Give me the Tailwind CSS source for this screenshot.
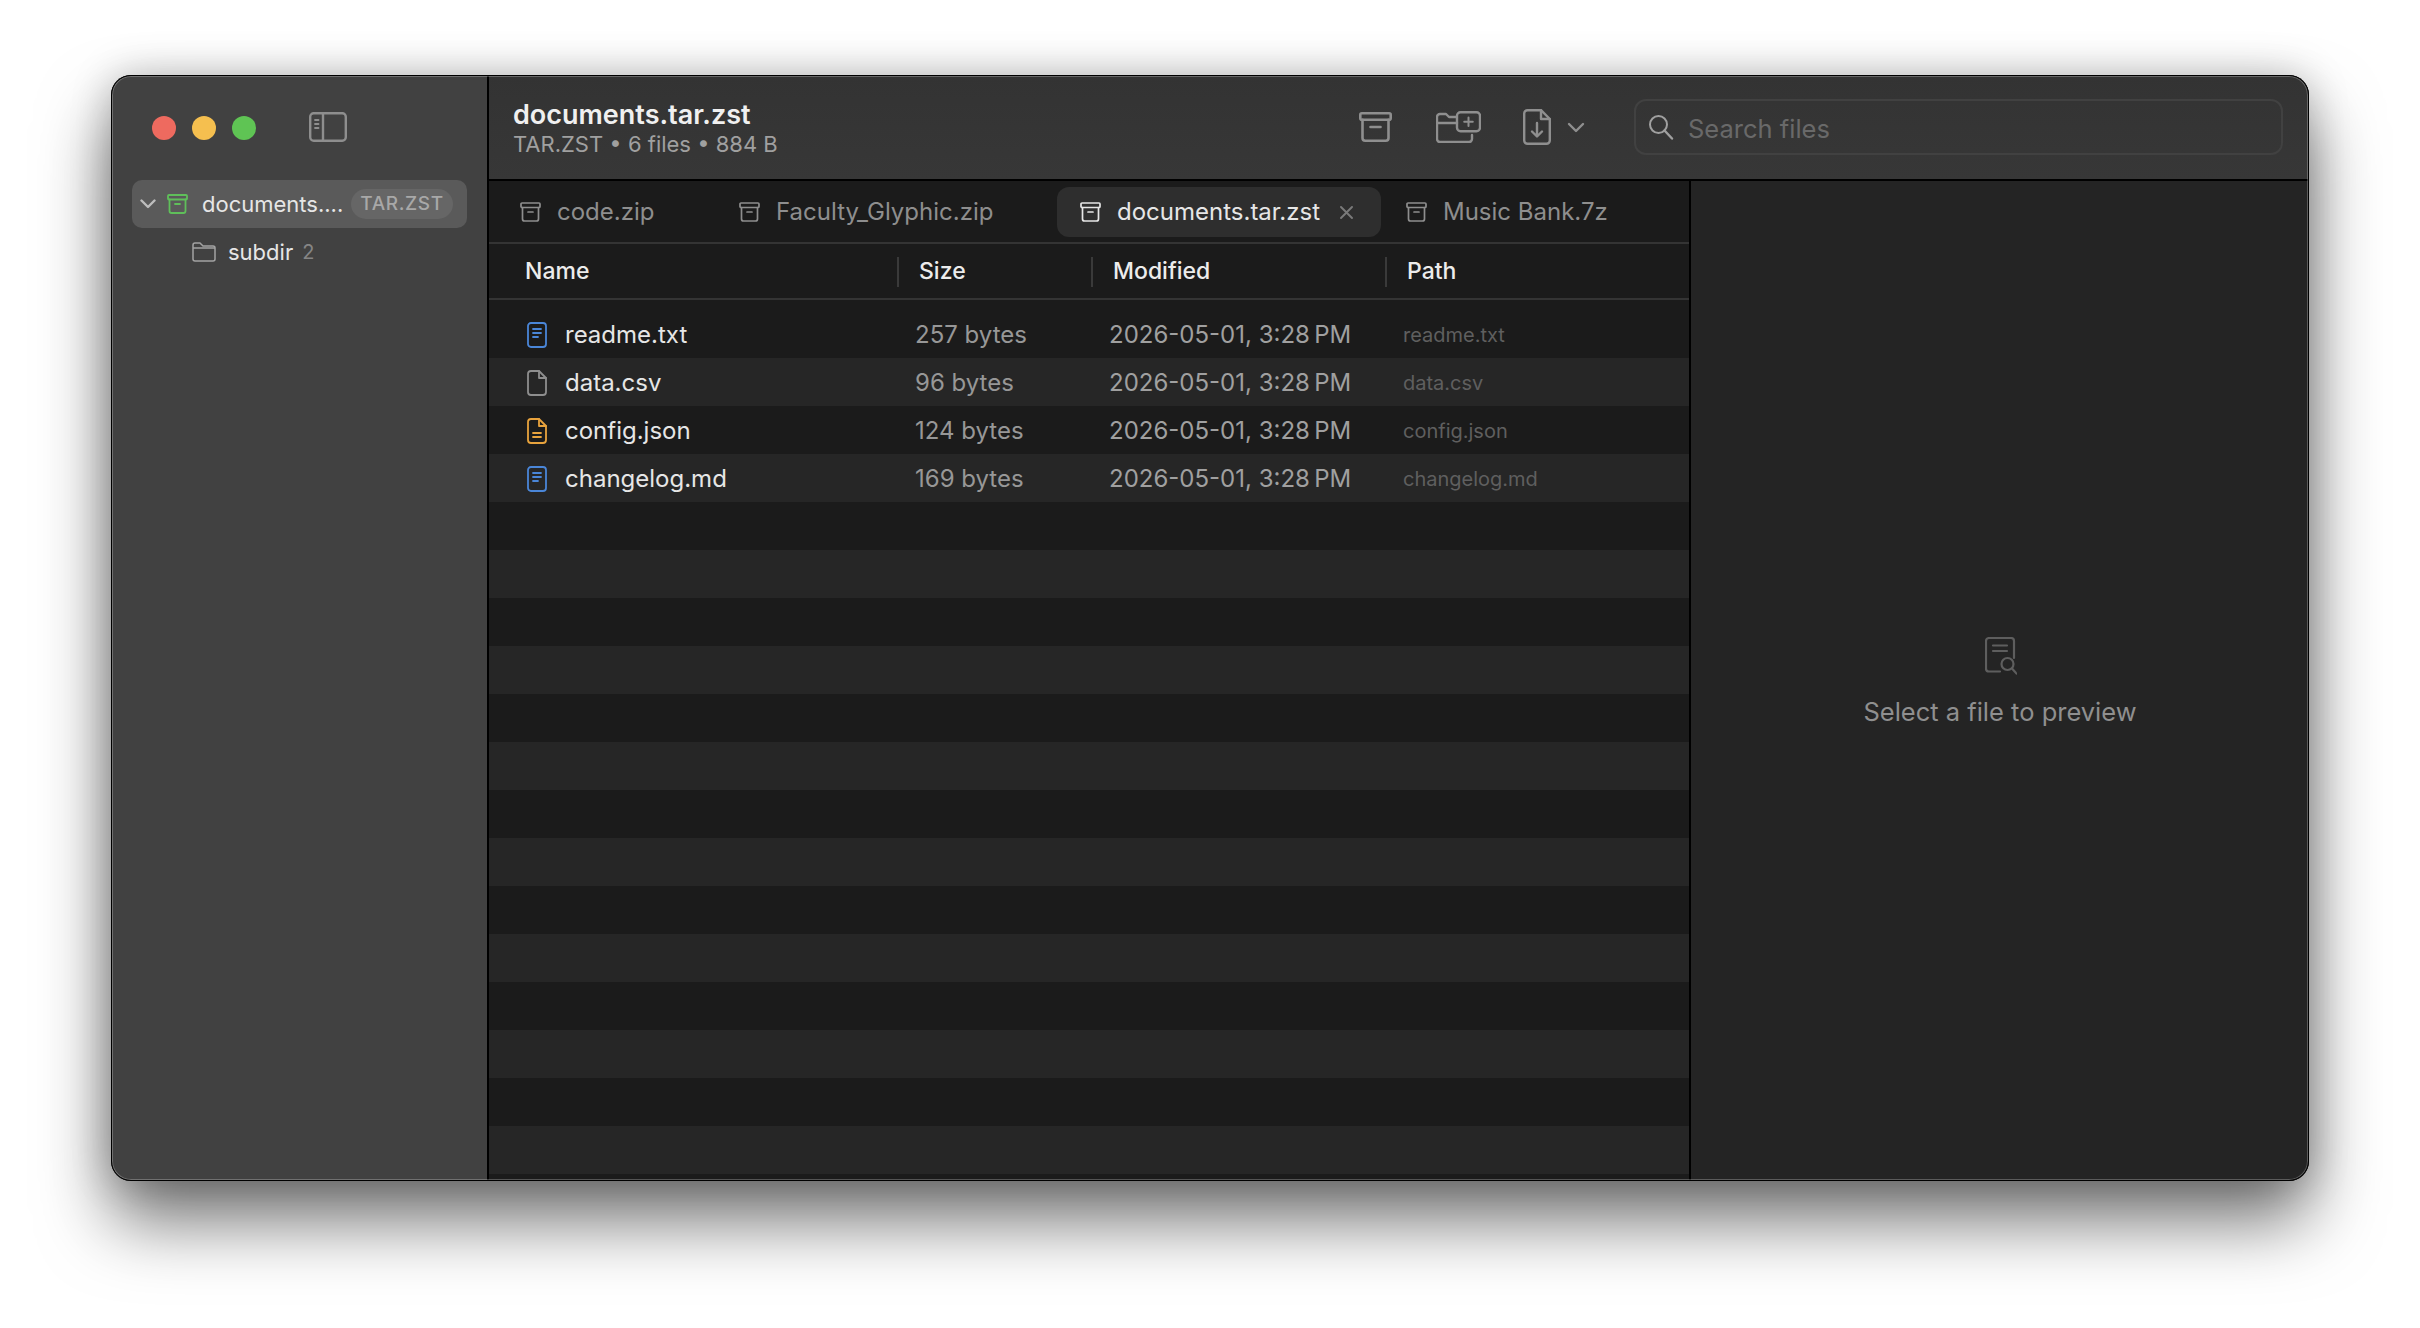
<!doctype html>
<html lang="en">
  <head>
    <meta charset="UTF-8" />
    <title>documents.tar.zst</title>
    <script src="https://cdn.jsdelivr.net/npm/@tailwindcss/browser@4"></script>
  </head>
  <body class="bg-white font-[Inter,sans-serif] antialiased">
    <div class="w-[2420px] h-[1328px] pt-[75px] pl-[111px] overflow-hidden">
      <!-- window -->
      <div class="relative flex w-[2198px] h-[1106px] rounded-[20px] bg-[#353535] shadow-[0_40px_70px_rgba(0,0,0,0.55),0_0_40px_rgba(0,0,0,0.22)]">
        <!-- sidebar -->
        <aside class="w-[378px] shrink-0 rounded-l-[20px] bg-[#414141] border-r-2 border-black">
          <div class="flex items-center h-[105px] pl-[41px] pt-px">
            <span class="w-6 h-6 rounded-full bg-[#ee6a5f]"></span>
            <span class="w-6 h-6 rounded-full bg-[#f5bf4f] ml-4"></span>
            <span class="w-6 h-6 rounded-full bg-[#5fc454] ml-4"></span>
            <svg class="ml-[53px] -mt-[3px] text-[#8e8e8e]" width="38" height="30" viewBox="0 0 38 30" fill="none" stroke="currentColor" stroke-width="2.4" stroke-linecap="round">
              <rect x="1.2" y="1.2" width="35.6" height="27.6" rx="3.5" />
              <path d="M14 1.2v27.6" />
              <path d="M6 8h3.5M6 12h3.5M6 16h3.5" stroke-width="1.8" />
            </svg>
          </div>
          <div class="flex items-center h-12 ml-[21px] mr-5 rounded-[10px] bg-[#5a5a5a] pl-2 pr-[14px]">
            <svg class="text-[#bdbdbd]" width="16" height="10" viewBox="0 0 16 10" fill="none" stroke="currentColor" stroke-width="2.4" stroke-linecap="round" stroke-linejoin="round">
              <path d="M1.5 1.5L8 8l6.5-6.5" />
            </svg>
            <svg class="ml-[11px] text-[#5fbf5a]" width="21" height="20" viewBox="0 0 21 20" fill="none" stroke="currentColor" stroke-width="1.8" stroke-linecap="round" stroke-linejoin="round">
              <rect x="1" y="1" width="19" height="4.5" rx="1" />
              <path d="M2.5 5.5V17a2 2 0 0 0 2 2h12a2 2 0 0 0 2-2V5.5" />
              <path d="M8 10h5" />
            </svg>
            <span class="ml-[14px] text-[22px] text-[#e6e6e6] whitespace-nowrap">documents....</span>
            <span class="ml-auto w-[102px] h-[30px] flex items-center justify-center rounded-full bg-[#666666] text-[19px] font-medium text-[#a8a8a8] tracking-[0.6px]">TAR.ZST</span>
          </div>
          <div class="flex items-center h-12 ml-[81px]">
            <svg class="text-[#a3a3a3]" width="24" height="20" viewBox="0 0 24 20" fill="none" stroke="currentColor" stroke-width="1.5" stroke-linejoin="round">
              <path d="M1 3a2 2 0 0 1 2-2h5l3 3h10a2 2 0 0 1 2 2v11a2 2 0 0 1-2 2H3a2 2 0 0 1-2-2V3z" />
              <path d="M1 6h22" />
            </svg>
            <span class="ml-3 text-[22px] text-[#e6e6e6]">subdir</span>
            <span class="ml-[9px] text-[20px] text-[#858585]">2</span>
          </div>
        </aside>

        <div class="flex-1 flex flex-col min-w-0">
          <!-- toolbar -->
          <header class="flex items-center h-[106px] shrink-0 pl-6 pr-[26px] border-b-2 border-black bg-gradient-to-b from-[#333333] to-[#373737] rounded-tr-[20px]">
            <div class="flex-1 min-w-0 pt-1">
              <div class="text-[27px] leading-[30px] font-semibold text-[#f0f0f0]">documents.tar.zst</div>
              <div class="text-[22px] leading-[28px] text-[#a0a0a0]">TAR.ZST • 6 files • 884 B</div>
            </div>
            <svg class="text-[#8f8f8f]" width="33" height="30" viewBox="0 0 33 30" fill="none" stroke="currentColor" stroke-width="2.6" stroke-linecap="round" stroke-linejoin="round">
              <rect x="1.3" y="1.3" width="30.4" height="6.4" rx="1.5" />
              <path d="M3.5 7.7V26a2.7 2.7 0 0 0 2.7 2.7h20.6a2.7 2.7 0 0 0 2.7-2.7V7.7" />
              <path d="M11.5 15h10" />
            </svg>
            <svg class="ml-[44px] text-[#8f8f8f]" width="45" height="32" viewBox="0 0 45 32" fill="none" stroke="currentColor" stroke-width="2.4" stroke-linecap="round" stroke-linejoin="round">
              <path d="M20 6h-7l-3-3H4a3 3 0 0 0-3 3v22a3 3 0 0 0 3 3h29a3 3 0 0 0 3-3v-4" />
              <path d="M1 12h20" />
              <rect x="21" y="1.2" width="23" height="19" rx="3.5" />
              <path d="M32.5 6.5v8.5M28.2 10.8h8.6" stroke-width="2" />
            </svg>
            <svg class="ml-[42px] text-[#8f8f8f]" width="28" height="36" viewBox="0 0 28 36" fill="none" stroke="currentColor" stroke-width="2.4" stroke-linecap="round" stroke-linejoin="round">
              <path d="M18 1.2H4.5a3.3 3.3 0 0 0-3.3 3.3v27a3.3 3.3 0 0 0 3.3 3.3h19a3.3 3.3 0 0 0 3.3-3.3V10z" />
              <path d="M18 1.2V10h8.8" />
              <path d="M14 14v13M9 22.5l5 5 5-5" />
            </svg>
            <svg class="ml-4 text-[#8f8f8f]" width="18" height="11" viewBox="0 0 18 11" fill="none" stroke="currentColor" stroke-width="2.4" stroke-linecap="round" stroke-linejoin="round">
              <path d="M2 2l7 7 7-7" />
            </svg>
            <div class="flex items-center ml-[49px] w-[649px] h-[56px] rounded-[12px] border-2 border-[#414141] pl-[12px]">
              <svg class="text-[#a0a0a0]" width="26" height="26" viewBox="0 0 26 26" fill="none" stroke="currentColor" stroke-width="2" stroke-linecap="round">
                <circle cx="10.5" cy="10.5" r="8.5" />
                <path d="M16.5 16.5l7.5 8" stroke-width="2.4" />
              </svg>
              <span class="ml-[14px] pt-[5px] text-[25.5px] text-[#696969]">Search files</span>
            </div>
          </header>

          <div class="flex-1 flex min-h-0">
            <!-- files -->
            <main class="w-[1202px] shrink-0 flex flex-col bg-[#1b1b1b] border-r-2 border-black overflow-hidden">
              <nav class="flex items-start gap-[3px] h-[63px] shrink-0 pl-2 pt-[6px] border-b-2 border-[#343434]">
                <div class="flex items-center w-[216px] h-[50px] pl-[23px] text-[#8e8e8e]">
                  <svg width="21" height="20" viewBox="0 0 21 20" fill="none" stroke="currentColor" stroke-width="1.7" stroke-linecap="round" stroke-linejoin="round"><rect x="1" y="1" width="19" height="4.5" rx="1" /><path d="M2.5 5.5V17a2 2 0 0 0 2 2h12a2 2 0 0 0 2-2V5.5" /><path d="M8 10h5" /></svg>
                  <span class="ml-4 text-[24px]">code.zip</span>
                </div>
                <div class="flex items-center w-[338px] h-[50px] pl-[23px] text-[#8e8e8e]">
                  <svg width="21" height="20" viewBox="0 0 21 20" fill="none" stroke="currentColor" stroke-width="1.7" stroke-linecap="round" stroke-linejoin="round"><rect x="1" y="1" width="19" height="4.5" rx="1" /><path d="M2.5 5.5V17a2 2 0 0 0 2 2h12a2 2 0 0 0 2-2V5.5" /><path d="M8 10h5" /></svg>
                  <span class="ml-4 text-[24px] whitespace-nowrap">Faculty_Glyphic.zip</span>
                </div>
                <div class="flex items-center w-[324px] h-[50px] pl-[23px] rounded-[12px] bg-[#2e2e2e] text-[#e6e6e6]">
                  <svg width="21" height="20" viewBox="0 0 21 20" fill="none" stroke="currentColor" stroke-width="1.7" stroke-linecap="round" stroke-linejoin="round"><rect x="1" y="1" width="19" height="4.5" rx="1" /><path d="M2.5 5.5V17a2 2 0 0 0 2 2h12a2 2 0 0 0 2-2V5.5" /><path d="M8 10h5" /></svg>
                  <span class="ml-4 text-[24px] whitespace-nowrap">documents.tar.zst</span>
                  <svg class="ml-5 text-[#7a7a7a]" width="13" height="13" viewBox="0 0 13 13" fill="none" stroke="currentColor" stroke-width="1.9" stroke-linecap="round"><path d="M1 1l11 11M12 1L1 12" /></svg>
                </div>
                <div class="flex items-center h-[50px] pl-[22px] text-[#8e8e8e]">
                  <svg width="21" height="20" viewBox="0 0 21 20" fill="none" stroke="currentColor" stroke-width="1.7" stroke-linecap="round" stroke-linejoin="round"><rect x="1" y="1" width="19" height="4.5" rx="1" /><path d="M2.5 5.5V17a2 2 0 0 0 2 2h12a2 2 0 0 0 2-2V5.5" /><path d="M8 10h5" /></svg>
                  <span class="ml-4 text-[24px] whitespace-nowrap">Music Bank.7z</span>
                </div>
              </nav>

              <div class="grid grid-cols-[408px_194px_294px_1fr] h-[56px] shrink-0 pt-px border-b-2 border-[#343434] text-[23px] font-medium text-[#ececec]">
                <div class="flex items-center pl-[36px]">Name</div>
                <div class="flex items-center"><span class="w-[2px] h-[30px] bg-[#3a3a3a] mr-5"></span>Size</div>
                <div class="flex items-center"><span class="w-[2px] h-[30px] bg-[#3a3a3a] mr-5"></span>Modified</div>
                <div class="flex items-center"><span class="w-[2px] h-[30px] bg-[#3a3a3a] mr-5"></span>Path</div>
              </div>

              <div class="flex-1 pt-[10px] overflow-hidden">
                <div class="grid grid-cols-[408px_194px_294px_1fr] items-center h-12 pt-px even:bg-[#262626]">
                  <div class="flex items-center pl-[38px] text-[24px] text-[#e6e6e6]">
                    <svg class="text-[#4a86d8]" width="20" height="26" viewBox="0 0 20 26" fill="none" stroke="currentColor" stroke-width="1.8" stroke-linecap="round"><rect x="1" y="1" width="18" height="24" rx="3" /><path d="M6 7h8M6 11h8M6 15h5" /></svg>
                    <span class="ml-[18px]">readme.txt</span>
                  </div>
                  <div class="pl-[18px] text-[24px] text-[#979797]">257 bytes</div>
                  <div class="pl-[18px] text-[24px] text-[#a0a0a0] whitespace-nowrap">2026-05-01, 3:28&#8239;PM</div>
                  <div class="pl-[18px] text-[20px] text-[#5f5f5f]">readme.txt</div>
                </div>
                <div class="grid grid-cols-[408px_194px_294px_1fr] items-center h-12 pt-px even:bg-[#262626]">
                  <div class="flex items-center pl-[38px] text-[24px] text-[#e6e6e6]">
                    <svg class="text-[#8e8e8e]" width="20" height="26" viewBox="0 0 20 26" fill="none" stroke="currentColor" stroke-width="1.8" stroke-linecap="round" stroke-linejoin="round"><path d="M12 1H4a3 3 0 0 0-3 3v18a3 3 0 0 0 3 3h12a3 3 0 0 0 3-3V8z" /><path d="M12 1v7h7" /></svg>
                    <span class="ml-[18px]">data.csv</span>
                  </div>
                  <div class="pl-[18px] text-[24px] text-[#979797]">96 bytes</div>
                  <div class="pl-[18px] text-[24px] text-[#a0a0a0] whitespace-nowrap">2026-05-01, 3:28&#8239;PM</div>
                  <div class="pl-[18px] text-[20px] text-[#5f5f5f]">data.csv</div>
                </div>
                <div class="grid grid-cols-[408px_194px_294px_1fr] items-center h-12 pt-px even:bg-[#262626]">
                  <div class="flex items-center pl-[38px] text-[24px] text-[#e6e6e6]">
                    <svg class="text-[#e8a33d]" width="20" height="26" viewBox="0 0 20 26" fill="none" stroke="currentColor" stroke-width="1.8" stroke-linecap="round" stroke-linejoin="round"><path d="M12 1H4a3 3 0 0 0-3 3v18a3 3 0 0 0 3 3h12a3 3 0 0 0 3-3V8z" /><path d="M12 1v7h7" /><path d="M6 15h8M6 19h8" /></svg>
                    <span class="ml-[18px]">config.json</span>
                  </div>
                  <div class="pl-[18px] text-[24px] text-[#979797]">124 bytes</div>
                  <div class="pl-[18px] text-[24px] text-[#a0a0a0] whitespace-nowrap">2026-05-01, 3:28&#8239;PM</div>
                  <div class="pl-[18px] text-[20px] text-[#5f5f5f]">config.json</div>
                </div>
                <div class="grid grid-cols-[408px_194px_294px_1fr] items-center h-12 pt-px even:bg-[#262626]">
                  <div class="flex items-center pl-[38px] text-[24px] text-[#e6e6e6]">
                    <svg class="text-[#4a86d8]" width="20" height="26" viewBox="0 0 20 26" fill="none" stroke="currentColor" stroke-width="1.8" stroke-linecap="round"><rect x="1" y="1" width="18" height="24" rx="3" /><path d="M6 7h8M6 11h8M6 15h5" /></svg>
                    <span class="ml-[18px]">changelog.md</span>
                  </div>
                  <div class="pl-[18px] text-[24px] text-[#979797]">169 bytes</div>
                  <div class="pl-[18px] text-[24px] text-[#a0a0a0] whitespace-nowrap">2026-05-01, 3:28&#8239;PM</div>
                  <div class="pl-[18px] text-[20px] text-[#5f5f5f]">changelog.md</div>
                </div>
                <!-- empty striped rows -->
                <div class="h-12 even:bg-[#262626]"></div>
                <div class="h-12 even:bg-[#262626]"></div>
                <div class="h-12 even:bg-[#262626]"></div>
                <div class="h-12 even:bg-[#262626]"></div>
                <div class="h-12 even:bg-[#262626]"></div>
                <div class="h-12 even:bg-[#262626]"></div>
                <div class="h-12 even:bg-[#262626]"></div>
                <div class="h-12 even:bg-[#262626]"></div>
                <div class="h-12 even:bg-[#262626]"></div>
                <div class="h-12 even:bg-[#262626]"></div>
                <div class="h-12 even:bg-[#262626]"></div>
                <div class="h-12 even:bg-[#262626]"></div>
                <div class="h-12 even:bg-[#262626]"></div>
                <div class="h-12 even:bg-[#262626]"></div>
              </div>
            </main>

            <!-- preview -->
            <section class="flex-1 flex flex-col items-center bg-[#242424] rounded-br-[20px] pt-[456px]">
              <svg class="ml-[2px] text-[#5e5e5e]" width="32" height="38" viewBox="0 0 32 38" fill="none" stroke="currentColor" stroke-width="2.2" stroke-linecap="round" stroke-linejoin="round">
                <path d="M15 34.5H4a3 3 0 0 1-3-3V4a3 3 0 0 1 3-3h22a3 3 0 0 1 3 3v17" />
                <path d="M8 8.5h14M8 14h14" />
                <circle cx="22.5" cy="27" r="6" />
                <path d="M27 31.5l4.5 5" />
              </svg>
              <div class="mt-[18px] text-[25.5px] text-[#8f8f8f]">Select a file to preview</div>
            </section>
          </div>
        </div>

        <!-- window edge over the panes -->
        <div class="absolute inset-0 rounded-[20px] pointer-events-none border border-black shadow-[inset_0_0_0_1px_rgba(255,255,255,0.25)]"></div>
      </div>
    </div>
  </body>
</html>
